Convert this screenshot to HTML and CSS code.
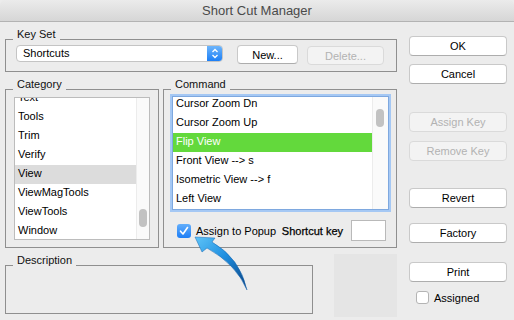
FILE: index.html
```html
<!DOCTYPE html>
<html lang="en">
<head>
    <meta charset="UTF-8">
    <title>Short Cut Manager</title>
    <link rel="stylesheet" href="styles.css">
</head>
<body>
    <div class="window">
        <div class="titlebar">Short Cut Manager</div>
        <div class="main">
            <div class="left">
                <!-- Key Set -->
                <div class="group keyset">
                    <span class="legend">Key Set</span>
                    <div class="popup">
                        <span class="popup-text">Shortcuts</span>
                        <span class="stepper">
                            <svg width="8" height="11" viewBox="0 0 8 11"><path d="M1.5 4 L4 1.5 L6.5 4 M1.5 7 L4 9.5 L6.5 7" fill="none" stroke="#fff" stroke-width="1.3"/></svg>
                        </span>
                    </div>
                    <button class="btn btn-new">New...</button>
                    <button class="btn btn-delete" disabled>Delete...</button>
                </div>

                <div class="lists">
                    <!-- Category -->
                    <div class="group category">
                        <span class="legend">Category</span>
                        <div class="listbox cat-list">
                            <ul class="rows">
                                <li>Text</li>
                                <li>Tools</li>
                                <li>Trim</li>
                                <li>Verify</li>
                                <li class="selected-grey">View</li>
                                <li>ViewMagTools</li>
                                <li>ViewTools</li>
                                <li>Window</li>
                            </ul>
                            <div class="track cat-track"><div class="thumb"></div></div>
                        </div>
                    </div>

                    <!-- Command -->
                    <div class="group command">
                        <span class="legend">Command</span>
                        <div class="listbox cmd-list">
                            <ul class="rows">
                                <li>Cursor Zoom Dn</li>
                                <li>Cursor Zoom Up</li>
                                <li class="selected-green">Flip View</li>
                                <li>Front View --&gt; s</li>
                                <li>Isometric View --&gt; f</li>
                                <li>Left View</li>
                            </ul>
                            <div class="track cmd-track"><div class="thumb"></div></div>
                        </div>
                        <div class="assign-row">
                            <span class="check checked">
                                <svg width="14" height="14" viewBox="0 0 14 14"><path d="M3.5 7.2 L6 10 L10.5 3.5" fill="none" stroke="#fff" stroke-width="1.6" stroke-linecap="round" stroke-linejoin="round"/></svg>
                            </span>
                            <span class="check-label">Assign to Popup</span>
                            <span class="shortcut-label">Shortcut key</span>
                            <span class="key-field"></span>
                        </div>
                    </div>
                </div>

                <div class="bottom">
                    <div class="group description">
                        <span class="legend">Description</span>
                    </div>
                    <div class="preview"></div>
                </div>
            </div>

            <div class="right">
                <button class="btn btn-ok">OK</button>
                <button class="btn btn-cancel">Cancel</button>
                <button class="btn btn-assign" disabled>Assign Key</button>
                <button class="btn btn-remove" disabled>Remove Key</button>
                <button class="btn btn-revert">Revert</button>
                <button class="btn btn-factory">Factory</button>
                <button class="btn btn-print">Print</button>
                <div class="assigned-row">
                    <span class="check"></span>
                    <span class="check-label">Assigned</span>
                </div>
            </div>
        </div>

        <!-- annotation arrow pointing at the checkbox -->
        <svg class="arrow" width="514" height="320" viewBox="0 0 514 320">
            <defs>
                <linearGradient id="arrowGrad" x1="196" y1="238" x2="247" y2="290" gradientUnits="userSpaceOnUse">
                    <stop offset="0" stop-color="#5cc2f7"/>
                    <stop offset="0.45" stop-color="#1f8fe0"/>
                    <stop offset="1" stop-color="#0a3f7e"/>
                </linearGradient>
            </defs>
            <path d="M195 237 L215 238 L212 242 Q240 258 247 290 Q236 264 207 248 L202 252 Z" fill="url(#arrowGrad)" stroke="#1667b3" stroke-width="0.5"/>
        </svg>
    </div>
</body>
</html>
```

FILE: styles.css
```css
* {
    margin: 0;
    padding: 0;
    box-sizing: border-box;
}

body {
    font-family: 'Liberation Sans', Arial, sans-serif;
    font-size: 11px;
    color: #000;
    background: #ececec;
}

.window {
    position: relative;
    width: 514px;
    height: 320px;
    background: #ececec;
    overflow: hidden;
    border-radius: 5px 5px 0 0;
}

.titlebar {
    height: 22px;
    line-height: 22px;
    text-align: center;
    font-size: 13px;
    color: #4a4a4a;
    background: linear-gradient(#ebebeb, #d6d6d6);
    border-bottom: 1px solid #b3b3b3;
}

.main {
    display: flex;
    padding-left: 5px;
}

.left {
    width: 392px;
}

/* Group boxes */
.group {
    position: relative;
    border: 1px solid #8f8f8f;
}

.legend {
    position: absolute;
    top: -12px;
    left: 7px;
    padding: 0 4px;
    line-height: 12px;
    background: #ececec;
    color: #111;
}

.keyset {
    margin-top: 17px;
    height: 33px;
    padding: 5px 0 0 10px;
    display: flex;
    align-items: flex-start;
}

.popup {
    display: flex;
    width: 207px;
    height: 17px;
    background: #fff;
    border: 1px solid #c4c4c4;
    border-radius: 4px;
    overflow: hidden;
}

.popup-text {
    flex: 1;
    padding-left: 6px;
    line-height: 15px;
}

.stepper {
    width: 15px;
    display: flex;
    align-items: center;
    justify-content: center;
    background: linear-gradient(#6db5fb, #1c7ff6);
}

.btn {
    font-family: inherit;
    font-size: 11px;
    color: #000;
    height: 20px;
    background: #fff;
    border: 1px solid #c9c9c9;
    border-bottom-color: #adadad;
    border-radius: 4px;
}

.btn:disabled {
    background: #f3f3f3;
    color: #b2b2b2;
    border-color: #dadada;
}

.btn-new {
    width: 61px;
    height: 19px;
    margin-left: 14px;
}

.btn-delete {
    width: 77px;
    height: 19px;
    margin-left: 9px;
    margin-top: 1px;
}

.lists {
    display: flex;
    margin-top: 17px;
}

.category {
    width: 154px;
    height: 159px;
    padding: 7px 0 0 8px;
}

.command {
    width: 234px;
    height: 159px;
    margin-left: 4px;
    padding: 6px 7px 0 8px;
}

/* List boxes */
.listbox {
    display: flex;
    background: #fff;
    border: 1px solid #bcbcbc;
    overflow: hidden;
}

.cat-list {
    width: 136px;
    height: 143px;
}

.cmd-list {
    width: 217px;
    height: 114px;
    border-color: #7ea8df;
    box-shadow: 0 0 0 2px #a5c8f4;
}

.rows {
    flex: 1;
    list-style: none;
}

.rows li {
    height: 19px;
    line-height: 16px;
    padding: 0 0 3px 3px;
    white-space: nowrap;
}

.cat-list .rows li:first-child {
    margin-top: -9px;
}

.cmd-list .rows li:first-child {
    margin-top: -2px;
}

.selected-grey {
    background: #dcdcdc;
}

.selected-green {
    background: #63d93c;
    color: #fff;
}

.track {
    background: #fafafa;
    border-left: 1px solid #ececec;
}

.cat-track {
    width: 13px;
    padding: 111px 0 0 2px;
}

.cmd-track {
    width: 16px;
    padding: 12px 0 0 3px;
}

.thumb {
    width: 8px;
    height: 18px;
    border-radius: 4px;
    background: #c2c2c2;
}

.assign-row {
    display: flex;
    align-items: center;
    margin-top: 10px;
    padding-left: 5px;
}

.check {
    width: 14px;
    height: 14px;
    background: #fff;
    border: 1px solid #b4b4b4;
    border-radius: 3px;
}

.check.checked {
    border: none;
    background: linear-gradient(#63aefb, #1d7ef6);
}

.check-label {
    margin-left: 5px;
}

.shortcut-label {
    margin-left: auto;
    margin-right: 8px;
    color: #000;
    -webkit-text-stroke: 0.25px #000;
}

.key-field {
    width: 35px;
    height: 21px;
    margin-right: 3px;
    background: #fff;
    border: 1px solid #b9b9b9;
}

.bottom {
    display: flex;
    align-items: flex-start;
    margin-top: 6px;
}

.description {
    width: 308px;
    height: 49px;
    margin-top: 11px;
}

.preview {
    width: 63px;
    height: 63px;
    margin-left: 21px;
    background: #e5e5e5;
}

/* Right column buttons */
.right {
    width: 98px;
    margin-left: 12px;
    display: flex;
    flex-direction: column;
}

.btn-ok { margin-top: 14px; }
.btn-cancel { margin-top: 8px; }
.btn-assign { margin-top: 28px; }
.btn-remove { margin-top: 9px; }
.btn-revert { margin-top: 27px; }
.btn-factory { margin-top: 15px; }
.btn-print { margin-top: 19px; }

.assigned-row {
    display: flex;
    align-items: center;
    margin-top: 9px;
    padding-left: 7px;
}

.assigned-row .check {
    width: 13px;
    height: 13px;
}

.arrow {
    position: absolute;
    left: 0;
    top: 0;
    pointer-events: none;
}
```
